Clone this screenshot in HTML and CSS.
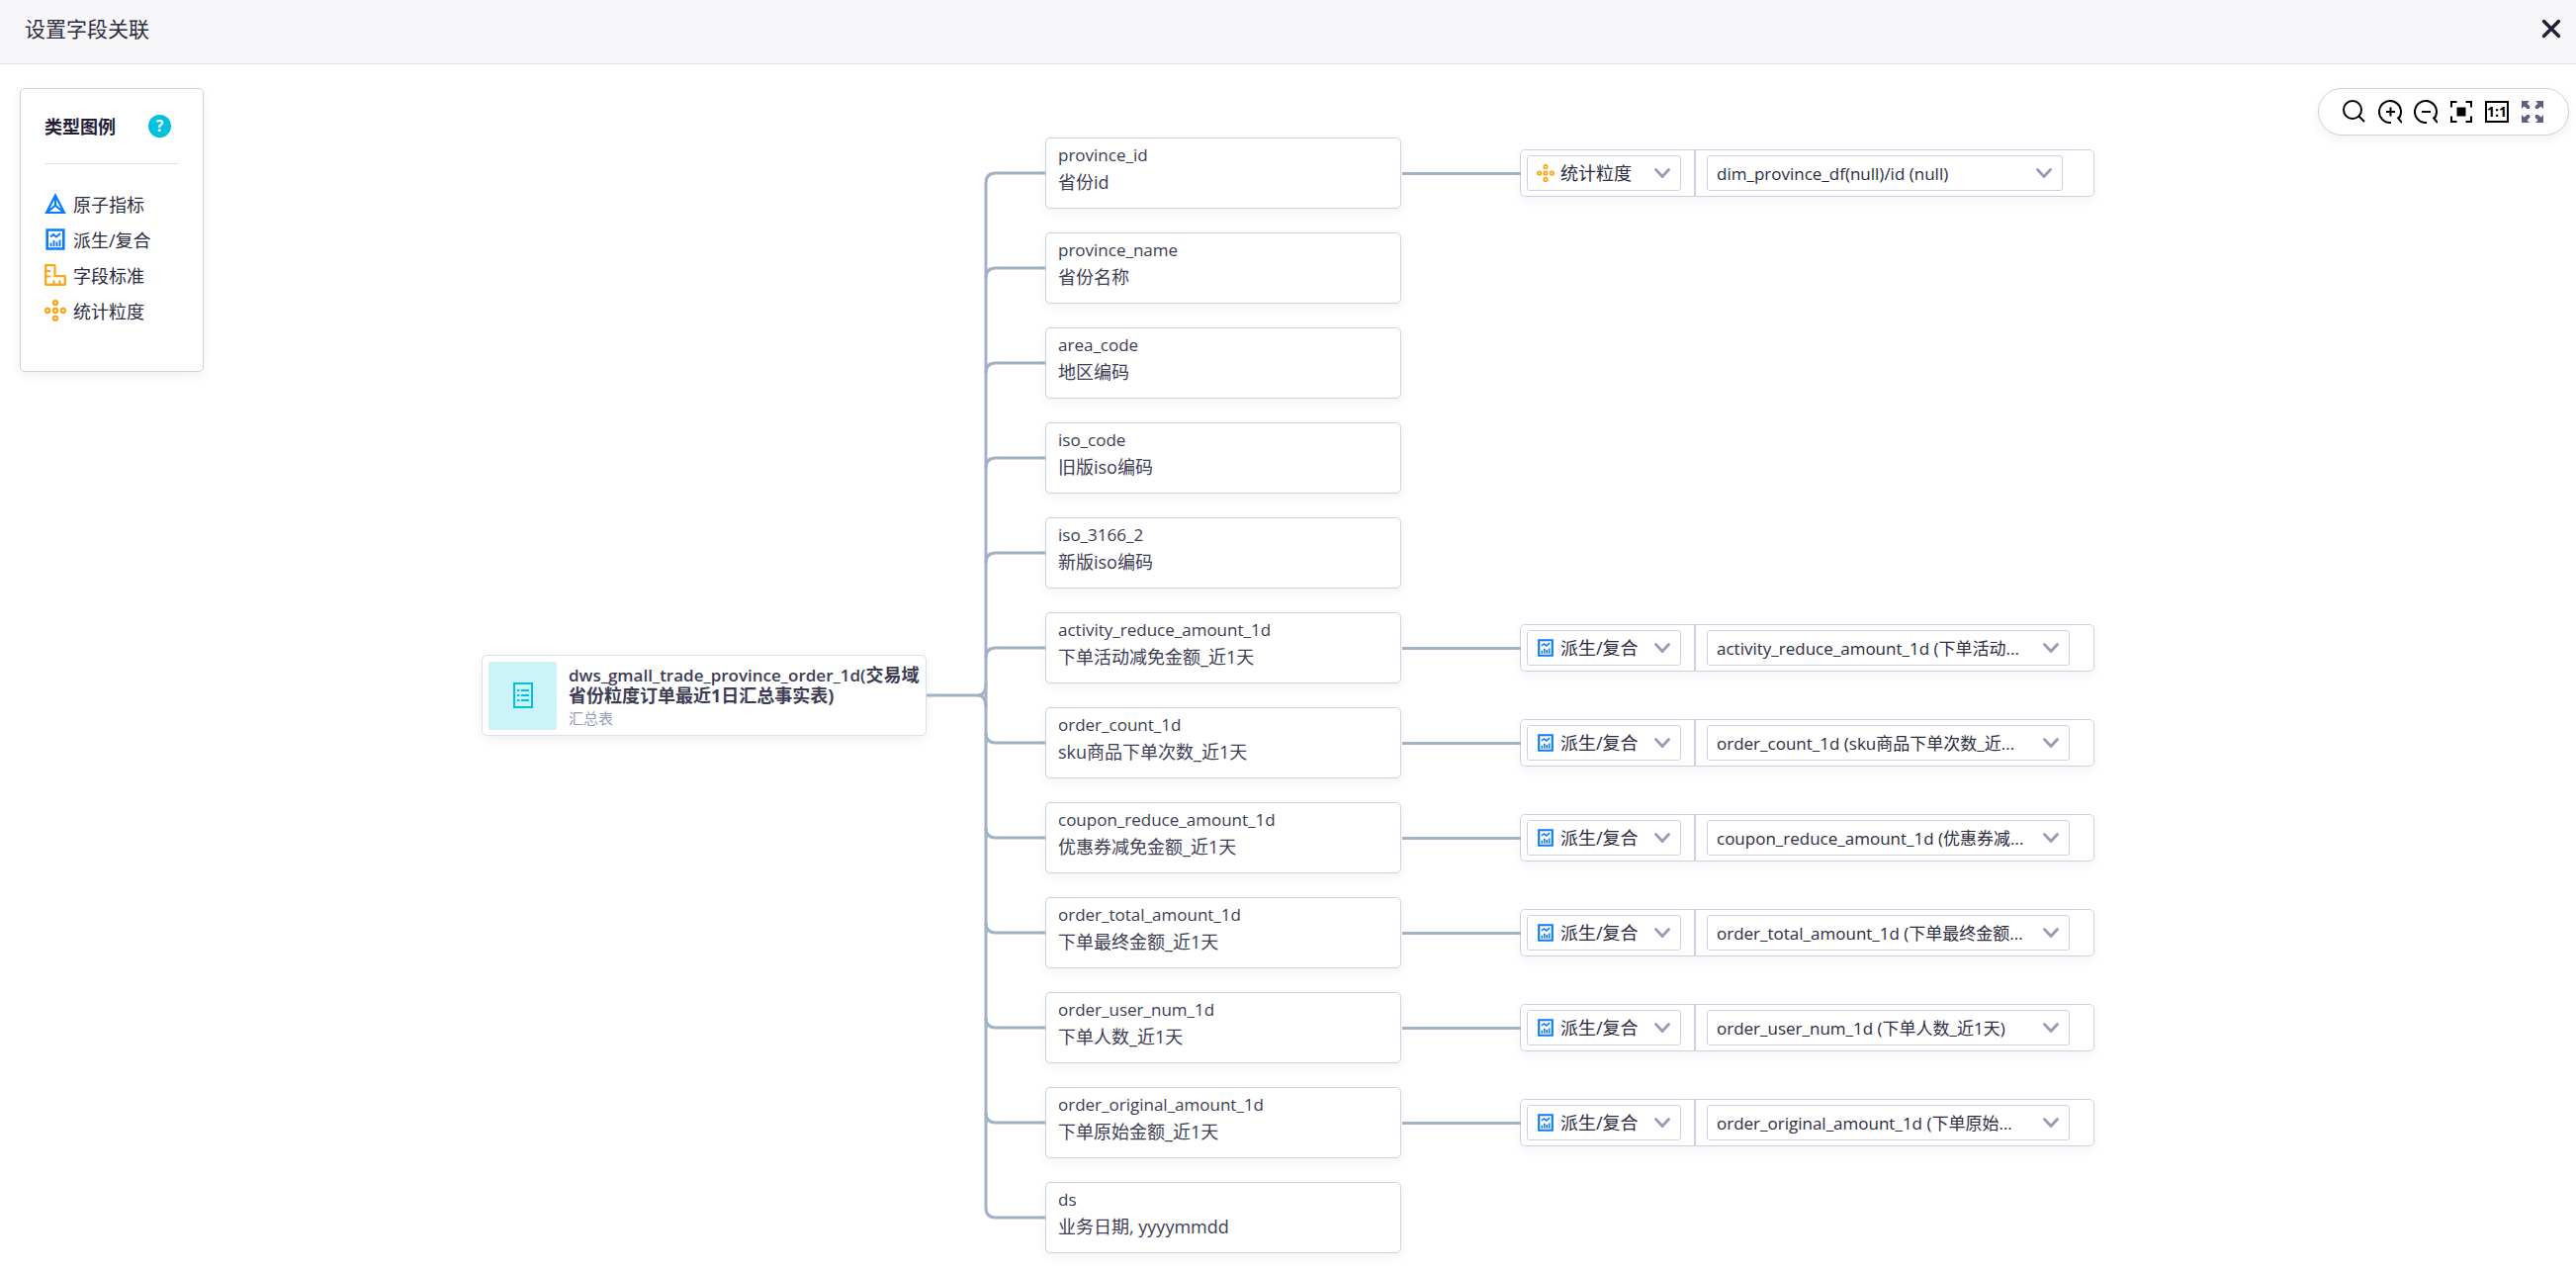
FILE: index.html
```html
<!DOCTYPE html>
<html lang="zh-CN">
<head>
<meta charset="utf-8">
<title>设置字段关联</title>
<link rel="stylesheet" href="styles.css">
</head>
<body>
<svg class="sprite" aria-hidden="true">
  <symbol id="i-atom" viewBox="0 0 22 22"><path d="M11 2.500 20 20H2ZM11 3v9.500M11 12.500 3 19.500M11 12.500l8 7" fill="none" stroke="currentColor" stroke-width="2.200"/></symbol>
  <symbol id="i-derived" viewBox="0 0 22 22"><path d="M2.700 1.500h16.600v19H2.700z" fill="none" stroke="currentColor" stroke-width="2.600"/><path d="m6 8.500 3-2.500 3 2.500 4-3.500M6.500 18v-3.500M9.500 18v-6M12.500 18v-4.500M15.500 18v-6.500" fill="none" stroke="currentColor" stroke-width="1.900"/></symbol>
  <symbol id="i-standard" viewBox="0 0 22 22"><path d="M1.200 1.200h9.300v11h10.300v8.600H1.200zM1 7h5M1 12.500h5M9.500 21v-4.500M15.500 21v-4.500" fill="none" stroke="currentColor" stroke-width="2.200" stroke-linejoin="round"/></symbol>
  <symbol id="i-grain" viewBox="0 0 22 22"><g fill="none" stroke="currentColor" stroke-width="2.100"><circle cx="11" cy="3.200" r="2.100"/><circle cx="3.200" cy="11" r="2.100"/><circle cx="11" cy="11" r="2.100"/><circle cx="18.800" cy="11" r="2.100"/><circle cx="11" cy="18.800" r="2.100"/></g></symbol>
  <symbol id="i-chevron" viewBox="0 0 16 10"><path d="m1.500 1.500 6.500 7 6.500-7" fill="none" stroke="currentColor" stroke-width="2.800" stroke-linecap="round"/></symbol>
</svg>

<header class="header">
  <h1 class="header-title">设置字段关联</h1>
  <button class="icon-btn close" aria-label="关闭"><svg width="20" height="20" viewBox="0 0 20 20"><path d="m2.500 2.500 15 15m0-15-15 15" stroke="currentColor" stroke-width="3.500" stroke-linecap="round"/></svg></button>
</header>

<main class="canvas">
  <aside class="legend">
    <div class="legend-head"><h2 class="legend-title">类型图例</h2><button class="help" aria-label="帮助">?</button></div>
    <ul class="legend-list">
      <li class="legend-item"><svg class="type-icon blue"><use href="#i-atom"/></svg>原子指标</li>
      <li class="legend-item"><svg class="type-icon blue"><use href="#i-derived"/></svg>派生/复合</li>
      <li class="legend-item"><svg class="type-icon orange"><use href="#i-standard"/></svg>字段标准</li>
      <li class="legend-item"><svg class="type-icon orange"><use href="#i-grain"/></svg>统计粒度</li>
    </ul>
  </aside>

  <div class="toolbar">
    <button class="icon-btn" aria-label="搜索"><svg width="24" height="24" fill="none" stroke="currentColor" stroke-width="2"><circle cx="10" cy="10" r="9"/><path d="m16 16 6 6"/></svg></button>
    <button class="icon-btn" aria-label="放大"><svg width="24" height="24" fill="none" stroke="currentColor" stroke-width="2"><path d="M13 23A11 11 0 1 1 20.500 19M19.500 17.500 24 23M12.500 7.500v9M8 12h9"/></svg></button>
    <button class="icon-btn" aria-label="缩小"><svg width="24" height="24" fill="none" stroke="currentColor" stroke-width="2"><path d="M13 23A11 11 0 1 1 20.500 19M19.500 17.500 24 23M8 12h9"/></svg></button>
    <button class="icon-btn" aria-label="适应画布"><svg width="24" height="24" fill="none" stroke="currentColor" stroke-width="2"><path d="M2 7.500V2h5.500M16.500 2H22v5.500M22 16.500V22h-5.500M7.500 22H2v-5.500"/><path d="M7.500 7.500h9v9h-9z" fill="currentColor" stroke="none"/></svg></button>
    <button class="icon-btn" aria-label="实际大小"><svg width="24" height="24"><path d="M1 2h22v20H1z" fill="none" stroke="currentColor" stroke-width="2"/><text x="12" y="17" text-anchor="middle" class="ratio">1:1</text></svg></button>
    <button class="icon-btn slate" aria-label="全屏"><svg width="24" height="24"><g fill="currentColor"><path id="arr" d="M1 1h8L6.500 3.500 9.500 6.500 9 9H6.500L3.500 6.500 1 9z"/><use href="#arr" transform="matrix(-1 0 0 1 24 0)"/><use href="#arr" transform="matrix(1 0 0 -1 0 24)"/><use href="#arr" transform="rotate(180 12 12)"/></g></svg></button>
  </div>

  <div class="tree">
    <article class="root">
      <div class="root-tile"><svg width="20" height="26" viewBox="0 0 20 26" fill="none" stroke="currentColor" stroke-width="2"><path d="M1 1h18v24H1zM4 8h2.500M4 13h2.500M4 18h2.500M8 8h8M8 13h8M8 18h8"/></svg></div>
      <div class="root-text">
        <h2 class="root-name"><span class="latin">dws_gmall_trade_province_order_1d(</span>交易域省份粒度订单最近1日汇总事实表)</h2>
        <p class="root-kind">汇总表</p>
      </div>
    </article>
    <svg class="wires" viewBox="0 0 120 1128" aria-hidden="true">
      <path d="M120 36H70Q60 36 60 46V1082Q60 1092 70 1092H120"/>
      <path d="M120 132H70Q60 132 60 142M120 228H70Q60 228 60 238M120 324H70Q60 324 60 334M120 420H70Q60 420 60 430M120 516H70Q60 516 60 526"/>
      <path d="M120 612H70Q60 612 60 602M120 708H70Q60 708 60 698M120 804H70Q60 804 60 794M120 900H70Q60 900 60 890M120 996H70Q60 996 60 986"/>
      <path d="M0 564H52Q60 564 60 552M52 564Q60 564 60 576"/>
    </svg>
    <ul class="fields">
      <li class="row">
        <div class="field"><p class="name">province_id</p><p class="desc">省份id</p></div>
        <div class="link">
          <div class="pick type"><svg class="type-icon orange"><use href="#i-grain"/></svg><select aria-label="类型"><option>统计粒度</option></select><svg class="chevron"><use href="#i-chevron"/></svg></div>
          <div class="pick target short"><select aria-label="关联对象"><option>dim_province_df(null)/id (null)</option></select><svg class="chevron"><use href="#i-chevron"/></svg></div>
        </div>
      </li>
      <li class="row"><div class="field"><p class="name">province_name</p><p class="desc">省份名称</p></div></li>
      <li class="row"><div class="field"><p class="name">area_code</p><p class="desc">地区编码</p></div></li>
      <li class="row"><div class="field"><p class="name">iso_code</p><p class="desc">旧版iso编码</p></div></li>
      <li class="row"><div class="field"><p class="name">iso_3166_2</p><p class="desc">新版iso编码</p></div></li>
      <li class="row">
        <div class="field"><p class="name">activity_reduce_amount_1d</p><p class="desc">下单活动减免金额_近1天</p></div>
        <div class="link">
          <div class="pick type"><svg class="type-icon blue"><use href="#i-derived"/></svg><select aria-label="类型"><option>派生/复合</option></select><svg class="chevron"><use href="#i-chevron"/></svg></div>
          <div class="pick target"><select aria-label="关联对象"><option>activity_reduce_amount_1d (下单活动...</option></select><svg class="chevron"><use href="#i-chevron"/></svg></div>
        </div>
      </li>
      <li class="row">
        <div class="field"><p class="name">order_count_1d</p><p class="desc">sku商品下单次数_近1天</p></div>
        <div class="link">
          <div class="pick type"><svg class="type-icon blue"><use href="#i-derived"/></svg><select aria-label="类型"><option>派生/复合</option></select><svg class="chevron"><use href="#i-chevron"/></svg></div>
          <div class="pick target"><select aria-label="关联对象"><option>order_count_1d (sku商品下单次数_近...</option></select><svg class="chevron"><use href="#i-chevron"/></svg></div>
        </div>
      </li>
      <li class="row">
        <div class="field"><p class="name">coupon_reduce_amount_1d</p><p class="desc">优惠券减免金额_近1天</p></div>
        <div class="link">
          <div class="pick type"><svg class="type-icon blue"><use href="#i-derived"/></svg><select aria-label="类型"><option>派生/复合</option></select><svg class="chevron"><use href="#i-chevron"/></svg></div>
          <div class="pick target"><select aria-label="关联对象"><option>coupon_reduce_amount_1d (优惠券减...</option></select><svg class="chevron"><use href="#i-chevron"/></svg></div>
        </div>
      </li>
      <li class="row">
        <div class="field"><p class="name">order_total_amount_1d</p><p class="desc">下单最终金额_近1天</p></div>
        <div class="link">
          <div class="pick type"><svg class="type-icon blue"><use href="#i-derived"/></svg><select aria-label="类型"><option>派生/复合</option></select><svg class="chevron"><use href="#i-chevron"/></svg></div>
          <div class="pick target"><select aria-label="关联对象"><option>order_total_amount_1d (下单最终金额...</option></select><svg class="chevron"><use href="#i-chevron"/></svg></div>
        </div>
      </li>
      <li class="row">
        <div class="field"><p class="name">order_user_num_1d</p><p class="desc">下单人数_近1天</p></div>
        <div class="link">
          <div class="pick type"><svg class="type-icon blue"><use href="#i-derived"/></svg><select aria-label="类型"><option>派生/复合</option></select><svg class="chevron"><use href="#i-chevron"/></svg></div>
          <div class="pick target"><select aria-label="关联对象"><option>order_user_num_1d (下单人数_近1天)</option></select><svg class="chevron"><use href="#i-chevron"/></svg></div>
        </div>
      </li>
      <li class="row">
        <div class="field"><p class="name">order_original_amount_1d</p><p class="desc">下单原始金额_近1天</p></div>
        <div class="link">
          <div class="pick type"><svg class="type-icon blue"><use href="#i-derived"/></svg><select aria-label="类型"><option>派生/复合</option></select><svg class="chevron"><use href="#i-chevron"/></svg></div>
          <div class="pick target"><select aria-label="关联对象"><option>order_original_amount_1d (下单原始...</option></select><svg class="chevron"><use href="#i-chevron"/></svg></div>
        </div>
      </li>
      <li class="row"><div class="field"><p class="name">ds</p><p class="desc">业务日期, yyyymmdd</p></div></li>
    </ul>
  </div>
</main>
</body>
</html>
```
FILE: styles.css
```css
* { box-sizing: border-box; margin: 0; padding: 0; }

body {
  font-family: "Open Sans", "Noto Sans CJK SC", sans-serif;
  font-size: 18px;
  font-weight: 400;
  color: #2b2c3f;
  background: #fff;
}

ul { list-style: none; }
svg { display: block; flex: none; }
.sprite { position: absolute; width: 0; height: 0; }
.blue { color: #0a7cff; }
.orange { color: #ffa415; }

.header {
  display: flex;
  align-items: center;
  justify-content: space-between;
  height: 65px;
  padding: 0 15px 6px 25px;
  background: #f7f7fa;
  border-bottom: 1px solid #e4e5ea;
}
.header-title { font-size: 21px; line-height: 30px; font-weight: 400; }

.icon-btn { display: block; border: 0; background: none; color: #000; }
.close { color: #1f2033; }
.slate { color: #5f6080; }

.canvas { position: relative; padding: 74px 8px 18px; }

.legend {
  position: absolute;
  top: 24px;
  left: 20px;
  width: 186px;
  height: 287px;
  padding: 19px 24px;
  border: 1px solid #cdd1e6;
  border-radius: 5px;
  background: #fff;
  box-shadow: 0 4px 12px rgba(0, 0, 0, 0.06);
}
.legend-head {
  display: flex;
  align-items: center;
  justify-content: space-between;
  height: 57px;
  padding: 0 8px 19px 0;
  border-bottom: 1px solid #dfe2f0;
}
.legend-title { font-size: 18px; line-height: 36px; font-weight: 700; color: #1f2033; }
.help {
  width: 23px;
  height: 23px;
  border: 0;
  border-radius: 50%;
  background: #00c1de;
  color: #fff;
  font: 700 16px/23px "Open Sans", sans-serif;
}
.legend-list { padding-top: 22px; }
.legend-item { display: flex; align-items: center; gap: 7px; height: 36px; }
.type-icon { width: 22px; height: 22px; }

.toolbar {
  position: absolute;
  top: 24px;
  right: 7px;
  display: flex;
  align-items: center;
  gap: 12px;
  height: 48px;
  padding: 0 24px;
  border: 1px solid #cdd1e6;
  border-radius: 24px;
  background: #fff;
  box-shadow: 0 4px 12px rgba(0, 0, 0, 0.06);
}
.ratio { font: 700 14px "Open Sans", sans-serif; fill: #000; }

.tree { display: flex; justify-content: center; align-items: center; }

.root {
  display: flex;
  flex: none;
  align-items: center;
  gap: 12px;
  width: 450px;
  height: 82px;
  padding: 6px 0 6px 6px;
  border: 1px solid #dcdff0;
  border-radius: 5px;
  background: #fff;
  box-shadow: 0 4px 12px rgba(0, 0, 0, 0.06);
}
.root-tile {
  display: grid;
  place-items: center;
  width: 69px;
  height: 69px;
  border-radius: 2px;
  background: #ccf3f9;
  color: #00c1de;
}
.root-text { flex: 1; padding-top: 4px; color: #3c3d55; }
.root-name { font-size: 18px; line-height: 21px; font-weight: 700; }
.root-name .latin { font-size: 17px; font-weight: 600; }
.root-kind { font-size: 15px; line-height: 24px; color: #979bb9; }

.wires { width: 120px; fill: none; stroke: #a2b1c6; stroke-width: 3; }

.fields { display: grid; gap: 24px; width: 1061px; flex: none; }
.row { display: flex; align-items: center; }
.field {
  width: 360px;
  height: 72px;
  padding: 3px 12px;
  border: 1px solid #cdd1e6;
  border-radius: 5px;
  background: #fff;
  color: #3c3d55;
  box-shadow: 0 4px 12px rgba(0, 0, 0, 0.05);
}
.name { font-size: 17px; line-height: 28px; }
.desc { line-height: 26px; }

.link {
  display: flex;
  flex: 1;
  align-items: center;
  height: 48px;
  border: 1px solid #cdd1e6;
  border-radius: 5px;
  margin-left: 120px;
  padding-left: 6px;
  position: relative;
  background: #fff;
  box-shadow: 0 4px 12px rgba(0, 0, 0, 0.05);
}
.link::before {
  content: "";
  position: absolute;
  right: 100%;
  width: 120px;
  height: 3px;
  background: #a2b1c6;
}
.pick {
  position: relative;
  display: flex;
  align-items: center;
  height: 36px;
  border: 1px solid #cdd1e6;
  border-radius: 3px;
}
.pick select {
  flex: 1;
  height: 34px;
  border: 0;
  background: none;
  appearance: none;
  color: #2b2c3f;
  font: inherit;
}
.pick .chevron { position: absolute; right: 10px; width: 16px; height: 10px; color: #979bb9; pointer-events: none; }
.type { width: 156px; }
.type .type-icon { position: absolute; left: 9px; width: 18px; height: 18px; pointer-events: none; }
.type select { padding-left: 33px; }
.target { width: 367px; margin-left: 26px; }
.target select { padding-left: 9px; font-size: 17px; }
.target::before {
  content: "";
  position: absolute;
  left: -14px;
  top: -6px;
  width: 2px;
  height: 46px;
  background: #cdd1e6;
}
.short { width: 360px; }
```
